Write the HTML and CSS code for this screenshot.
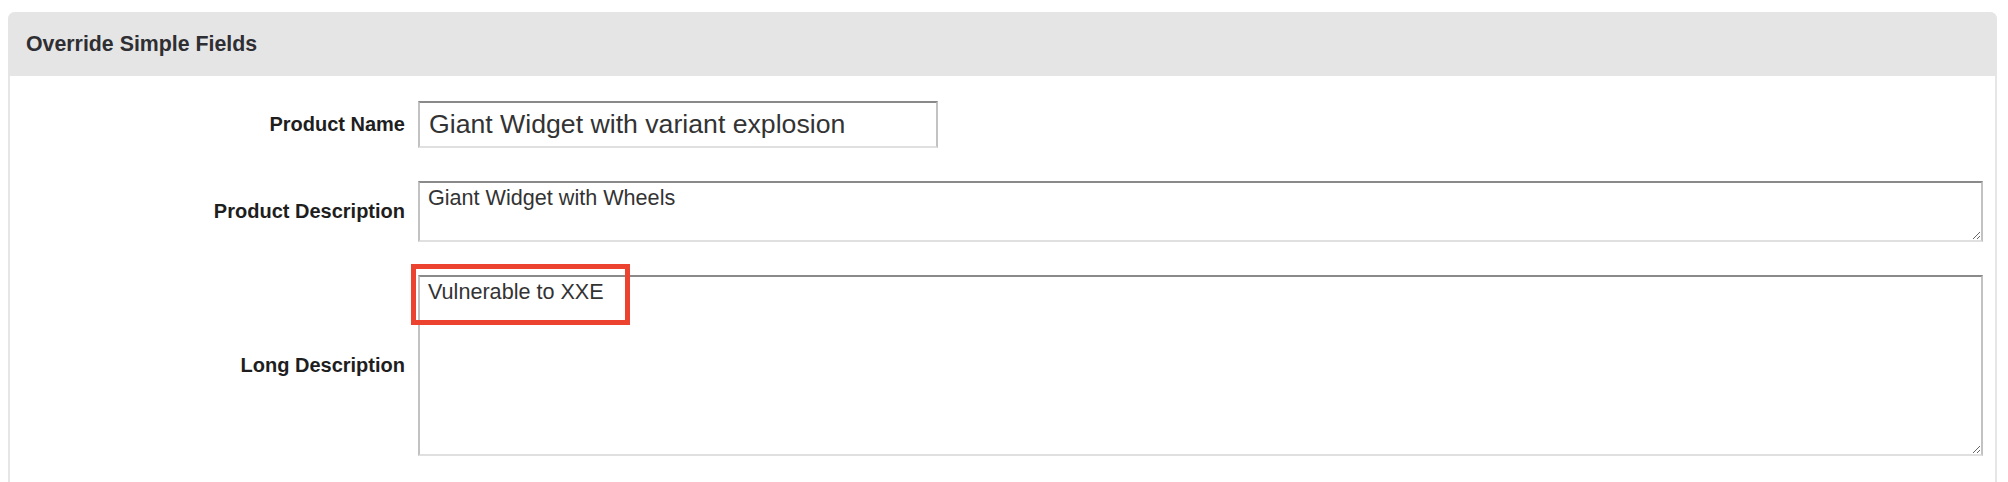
FILE: index.html
```html
<!DOCTYPE html>
<html lang="en">
<head>
<meta charset="utf-8">
<title>Override Simple Fields</title>
<link rel="stylesheet" href="styles.css">
</head>
<body>
<div class="panel">
  <div class="panel-heading">Override Simple Fields</div>
  <div class="panel-body">
    <label class="label" for="pname">Product Name</label>
    <div class="field">
      <input id="pname" class="text-input" type="text" value="Giant Widget with variant explosion">
    </div>

    <label class="label" for="pdesc">Product Description</label>
    <div class="field">
      <textarea id="pdesc" class="textarea short">Giant Widget with Wheels</textarea>
    </div>

    <label class="label" for="ldesc">Long Description</label>
    <div class="field highlighted">
      <textarea id="ldesc" class="textarea tall">Vulnerable to XXE</textarea>
      <span class="callout"></span>
    </div>
  </div>
</div>
</body>
</html>
```

FILE: styles.css
```css
html, body {
  background: #ffffff;
}

body {
  margin: 12px 11px 0 8px;
  font-family: "Liberation Sans", Arial, sans-serif;
  color: #222;
}

.panel {
  border: 2px solid #e6e6e6;
  border-top: 0;
  border-radius: 7px 7px 0 0;
  background: #fff;
}

.panel-heading {
  height: 64px;
  margin: 0 -2px;
  padding: 0 18px;
  display: flex;
  align-items: center;
  background: #e5e5e5;
  border-radius: 7px 7px 0 0;
  font-size: 21.33px;
  font-weight: bold;
  color: #2e2e33;
}

.panel-body {
  display: grid;
  grid-template-columns: 395px 1fr;
  column-gap: 13px;
  row-gap: 33px;
  align-items: center;
  padding: 25px 12px 30px 0;
}

.label {
  text-align: right;
  font-size: 20px;
  font-weight: bold;
  color: #1e1e1e;
}

.field {
  display: flex;
}

.highlighted {
  position: relative;
}

.text-input,
.textarea {
  box-sizing: border-box;
  margin: 0;
  font-family: "Liberation Sans", Arial, sans-serif;
  color: #333;
  background: #fff;
  border-style: solid;
  border-width: 2px;
  border-color: #8a8a8a #c2c2c2 #e0e0e0 #c2c2c2;
  border-radius: 0;
  outline: none;
}

.text-input {
  width: 520px;
  height: 47px;
  padding: 0 9px;
  font-size: 26.67px;
}

.textarea {
  width: 100%;
  padding: 2px 8px;
  font-size: 21.6px;
  line-height: normal;
  resize: vertical;
}

.textarea.short {
  height: 61px;
}

.textarea.tall {
  height: 181px;
}

.callout {
  position: absolute;
  left: -7px;
  top: -11px;
  width: 219px;
  height: 61px;
  box-sizing: border-box;
  border: 5px solid #ec4331;
  pointer-events: none;
}
```
